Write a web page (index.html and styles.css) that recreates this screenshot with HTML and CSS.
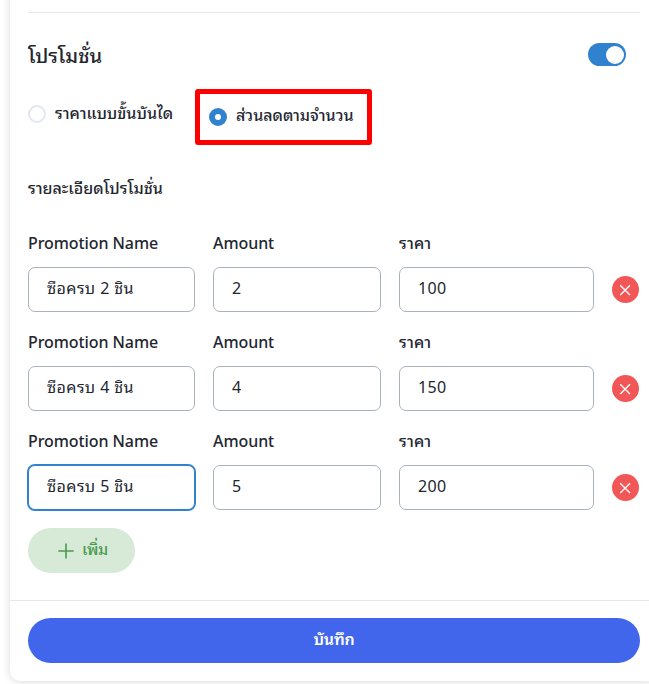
FILE: index.html
```
<!DOCTYPE html>
<html lang="th">
<head>
  <meta charset="UTF-8">
  <meta name="viewport" content="width=device-width, initial-scale=1.0">
  <title>โปรโมชั่น</title>
  <link rel="stylesheet" href="styles.css">
</head>
<body>
  <form class="card">
    <div class="card-body">
      <div class="promo-header">
        <h2 class="title">โปรโมชั่น</h2>
        <label class="switch">
          <input type="checkbox" class="switch-input" checked>
          <span class="switch-knob"></span>
        </label>
      </div>

      <div class="type-options">
        <label class="option">
          <input type="radio" class="radio" name="type" value="step">
          <span class="option-text">ราคาแบบขั้นบันได</span>
        </label>
        <label class="option option-marked">
          <input type="radio" class="radio" name="type" value="amount" checked>
          <span class="option-text">ส่วนลดตามจำนวน</span>
        </label>
      </div>

      <h3 class="subtitle">รายละเอียดโปรโมชั่น</h3>

      <div class="promo-row">
        <label class="field"><span class="label">Promotion Name</span><input type="text" class="input" value="ซือครบ 2 ชิน"></label>
        <label class="field"><span class="label">Amount</span><input type="text" class="input" value="2"></label>
        <label class="field"><span class="label label-th">ราคา</span><input type="text" class="input" value="100"></label>
        <button type="button" class="remove" aria-label="ลบ">
          <svg width="27" height="27" viewBox="0 0 27 27"><path d="M8.2 9.2l9.8 9.8M18 9.2l-9.8 9.8"/></svg>
        </button>
      </div>
      <div class="promo-row">
        <label class="field"><span class="label">Promotion Name</span><input type="text" class="input" value="ซือครบ 4 ชิน"></label>
        <label class="field"><span class="label">Amount</span><input type="text" class="input" value="4"></label>
        <label class="field"><span class="label label-th">ราคา</span><input type="text" class="input" value="150"></label>
        <button type="button" class="remove" aria-label="ลบ">
          <svg width="27" height="27" viewBox="0 0 27 27"><path d="M8.2 9.2l9.8 9.8M18 9.2l-9.8 9.8"/></svg>
        </button>
      </div>
      <div class="promo-row">
        <label class="field"><span class="label">Promotion Name</span><input type="text" class="input input-active" value="ซือครบ 5 ชิน"></label>
        <label class="field"><span class="label">Amount</span><input type="text" class="input" value="5"></label>
        <label class="field"><span class="label label-th">ราคา</span><input type="text" class="input" value="200"></label>
        <button type="button" class="remove" aria-label="ลบ">
          <svg width="27" height="27" viewBox="0 0 27 27"><path d="M8.2 9.2l9.8 9.8M18 9.2l-9.8 9.8"/></svg>
        </button>
      </div>

      <button type="button" class="add">
        <svg width="16" height="16" viewBox="0 0 16 16"><path d="M8 .5v15M.3 8h15.4"/></svg>
        <span>เพิ่ม</span>
      </button>
    </div>

    <div class="card-footer">
      <button type="button" class="save">บันทึก</button>
    </div>
  </form>
</body>
</html>
```
FILE: styles.css
```
* {
  box-sizing: border-box;
}
body {
  margin: 0;
  height: 684px;
  overflow: hidden;
  background-color: #fff;
  color: #23262f;
  font-family: "Noto Sans Thai Looped", "Noto Looped Thai", "Noto Sans", "Loma", sans-serif;
  font-size: 16px;
}
button, input {
  font-family: inherit;
  font-size: inherit;
  color: inherit;
}
.card {
  width: 648px;
  height: 701px;
  margin: -20px 0 0 10px;
  background-color: #fff;
  border-radius: 10px;
  box-shadow: 0 1px 10px rgba(0, 0, 0, 0.14);
}
.card-body {
  height: 620px;
  padding: 32px 18px 0;
}
.promo-header {
  display: flex;
  justify-content: space-between;
  align-items: flex-start;
  height: 77px;
  border-top: 1px solid #e6e8ec;
}
.title {
  margin: 25px 0 0;
  font-size: 20px;
  font-weight: 500;
  line-height: 32px;
}
.switch {
  display: flex;
  align-items: center;
  justify-content: flex-end;
  width: 38px;
  height: 23px;
  margin: 30px 14px 0 0;
  padding: 2px;
  border-radius: 12px;
  background-color: #3182ce;
}
.switch-input {
  display: none;
}
.switch-knob {
  width: 18px;
  height: 18px;
  border-radius: 50%;
  background-color: #fff;
}
.type-options {
  display: flex;
  height: 56px;
}
.option {
  display: flex;
  align-items: center;
  gap: 9px;
  width: 145px;
  height: 50px;
  white-space: nowrap;
}
.option-text {
  padding-bottom: 5px;
  font-weight: 500;
}
.option-marked {
  height: 56px;
  width: 177px;
  margin-left: 22px;
  padding-left: 9px;
  border: 5px solid #fe0000;
  border-radius: 3px;
}
.option-marked .option-text {
  padding-bottom: 6px;
}
.radio {
  appearance: none;
  flex: none;
  width: 18px;
  height: 18px;
  margin: 0;
  border: 2px solid #e2e8f0;
  border-radius: 50%;
}
.radio:checked {
  border: 6px solid #3182ce;
}
.subtitle {
  margin: 29px 0 0;
  height: 56px;
  font-size: 16px;
  font-weight: 500;
  line-height: 26px;
}
.promo-row {
  display: grid;
  grid-template-columns: 167px 168px 195px 27px;
  column-gap: 18px;
  align-items: end;
  height: 99px;
  padding-bottom: 17px;
}
.field {
  display: block;
}
.label {
  display: block;
  height: 37px;
  font-weight: 500;
  line-height: 24px;
  letter-spacing: -0.07px;
}
.label-th {
  letter-spacing: 0.2px;
}
.input {
  display: block;
  width: 100%;
  height: 45px;
  padding: 0 18px 5px;
  border: 1px solid #a9b1bc;
  border-radius: 7px;
  outline: none;
  background-color: #fff;
  letter-spacing: 0.4px;
}
.input-active {
  border-color: #3182ce;
  box-shadow: 0 0 0 1px #3182ce;
}
.remove {
  width: 27px;
  height: 27px;
  margin-bottom: 9px;
  padding: 0;
  border: none;
  border-radius: 50%;
  background-color: #f25757;
}
.remove svg {
  display: block;
  fill: none;
  stroke: #fff;
  stroke-width: 1.3;
}
.add {
  display: flex;
  align-items: center;
  gap: 8px;
  width: 107px;
  height: 45px;
  margin-top: 1px;
  padding: 0 0 0 30px;
  border: none;
  border-radius: 23px;
  background-color: #d7ead8;
  color: #4a9a4e;
}
.add svg {
  flex: none;
  fill: none;
  stroke: #4a9a4e;
  stroke-width: 1.6;
}
.add span {
  padding-bottom: 5px;
  font-weight: 500;
  letter-spacing: -0.3px;
}
.card-footer {
  height: 81px;
  padding: 17px 18px;
  border-top: 1px solid #e6e8ec;
}
.save {
  display: block;
  width: 100%;
  height: 45px;
  padding: 0 0 5px;
  border: none;
  border-radius: 23px;
  background-color: #4166ec;
  color: #fff;
  font-weight: 600;
  letter-spacing: -0.2px;
}
```
